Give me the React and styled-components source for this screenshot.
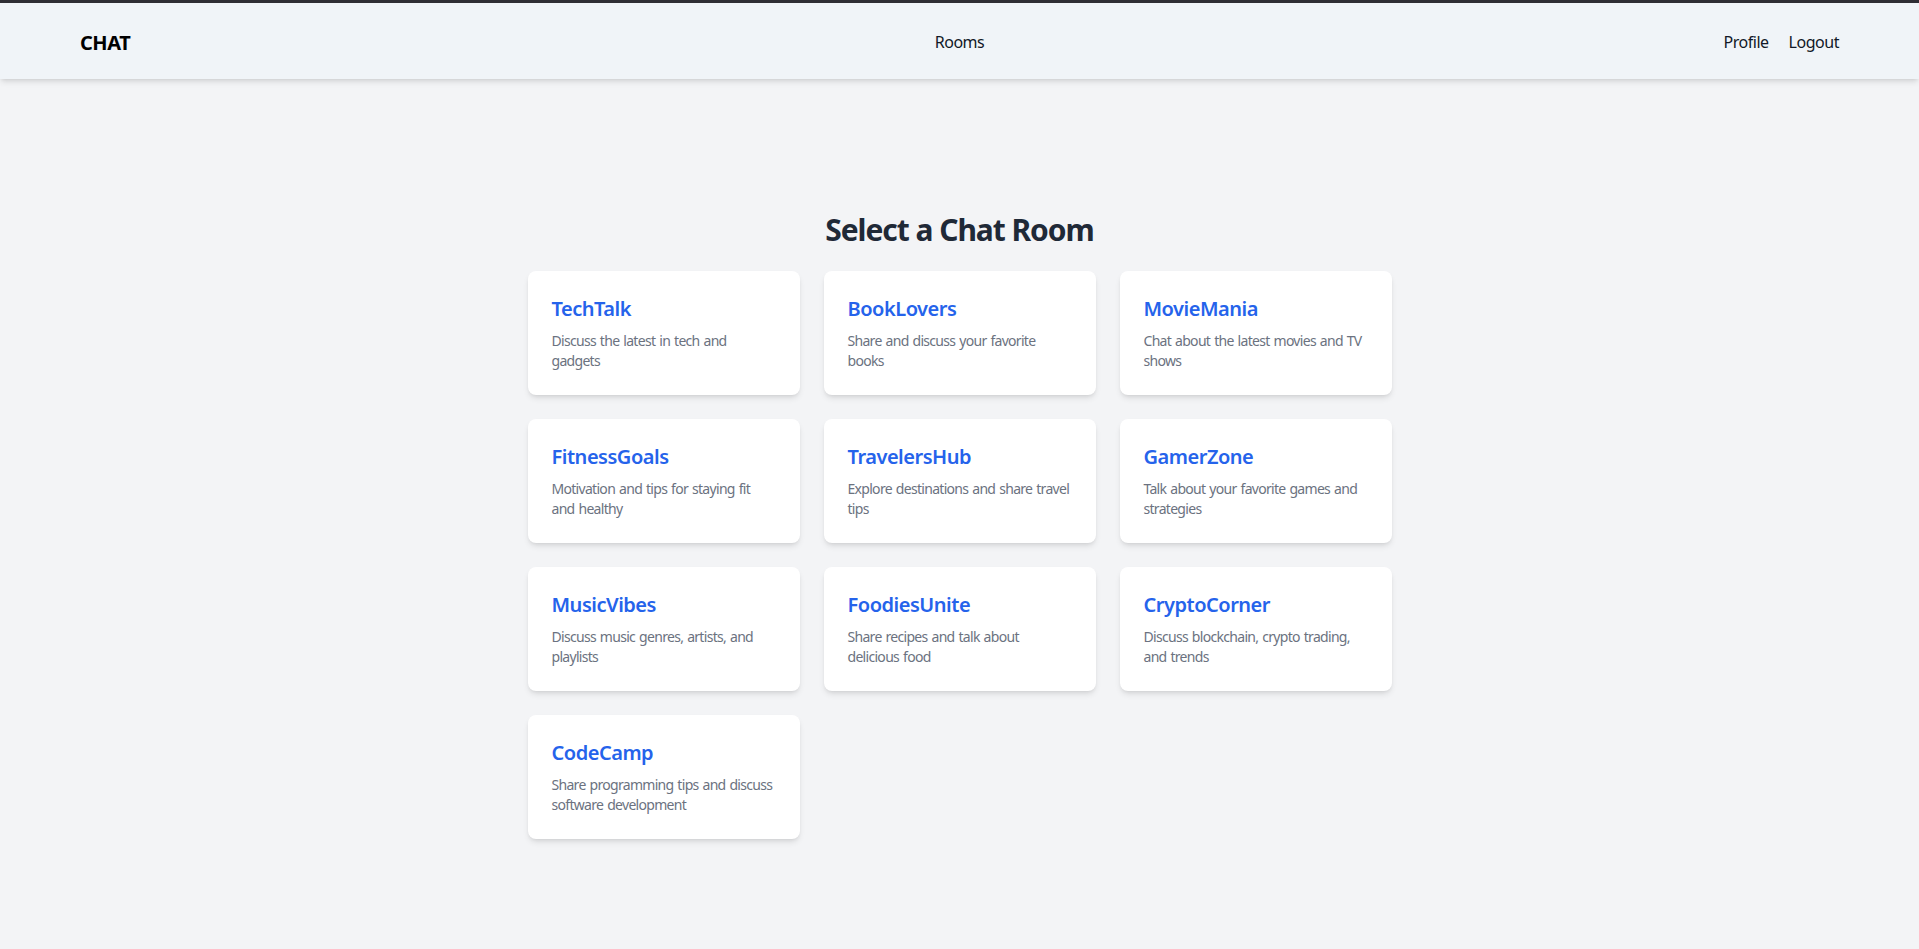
import React from "react";
import styled, { createGlobalStyle } from "styled-components";

const GlobalStyle = createGlobalStyle`
  * { box-sizing: border-box; }
  html, body {
    margin: 0;
    padding: 0;
    background-color: #f3f4f6;
    font-family: "Noto Sans", "Open Sans", sans-serif;
    letter-spacing: -0.03em;
  }
`;

const rooms = [
  { name: "TechTalk", desc: "Discuss the latest in tech and gadgets" },
  { name: "BookLovers", desc: "Share and discuss your favorite books" },
  { name: "MovieMania", desc: "Chat about the latest movies and TV shows" },
  { name: "FitnessGoals", desc: "Motivation and tips for staying fit and healthy" },
  { name: "TravelersHub", desc: "Explore destinations and share travel tips" },
  { name: "GamerZone", desc: "Talk about your favorite games and strategies" },
  { name: "MusicVibes", desc: "Discuss music genres, artists, and playlists" },
  { name: "FoodiesUnite", desc: "Share recipes and talk about delicious food" },
  { name: "CryptoCorner", desc: "Discuss blockchain, crypto trading, and trends" },
  { name: "CodeCamp", desc: "Share programming tips and discuss software development" },
];

const Page = styled.div`
  min-height: 949px;
  background-color: #f3f4f6;
`;

const NavBar = styled.nav`
  display: flex;
  align-items: center;
  justify-content: space-between;
  height: 79px;
  padding: 2px 80px 0;
  border-top: 3px solid #2e2e35;
  background-color: #f0f4f8;
  box-shadow: 0 4px 6px -1px rgba(0, 0, 0, 0.1), 0 2px 4px -2px rgba(0, 0, 0, 0.1);
  position: relative;
`;

const Brand = styled.div`
  flex: 1;
  font-size: 20px;
  font-weight: 700;
  color: #000;
`;

const NavCenter = styled.div`
  flex: 1;
  display: flex;
  justify-content: center;
`;

const NavRight = styled.div`
  flex: 1;
  display: flex;
  justify-content: flex-end;
  gap: 20px;
`;

const NavLink = styled.a`
  font-size: 16px;
  color: #111827;
  text-decoration: none;
  cursor: pointer;
`;

const Main = styled.main`
  max-width: 896px;
  margin: 0 auto;
  padding: 133px 16px 40px;
`;

const Heading = styled.h2`
  margin: 0 0 23px;
  text-align: center;
  font-size: 30px;
  line-height: 36px;
  font-weight: 700;
  letter-spacing: -0.035em;
  color: #1f2937;
`;

const Grid = styled.div`
  display: grid;
  grid-template-columns: repeat(3, 1fr);
  gap: 24px;
`;

const Card = styled.div`
  background-color: #fff;
  border-radius: 8px;
  padding: 24px;
  box-shadow: 0 4px 6px -1px rgba(0, 0, 0, 0.1), 0 2px 4px -2px rgba(0, 0, 0, 0.1);
  cursor: pointer;
`;

const Title = styled.h3`
  margin: 0 0 8px;
  font-size: 20px;
  line-height: 28px;
  font-weight: 600;
  color: #2563eb;
`;

const Desc = styled.p`
  margin: 0;
  font-size: 14px;
  line-height: 20px;
  letter-spacing: -0.05em;
  word-spacing: 1px;
  color: #6b7280;
`;

export default function App() {
  return (
    <Page>
      <GlobalStyle />
      <NavBar>
        <Brand>CHAT</Brand>
        <NavCenter>
          <NavLink>Rooms</NavLink>
        </NavCenter>
        <NavRight>
          <NavLink>Profile</NavLink>
          <NavLink>Logout</NavLink>
        </NavRight>
      </NavBar>
      <Main>
        <Heading>Select a Chat Room</Heading>
        <Grid>
          {rooms.map((room) => (
            <Card key={room.name}>
              <Title>{room.name}</Title>
              <Desc>{room.desc}</Desc>
            </Card>
          ))}
        </Grid>
      </Main>
    </Page>
  );
}
